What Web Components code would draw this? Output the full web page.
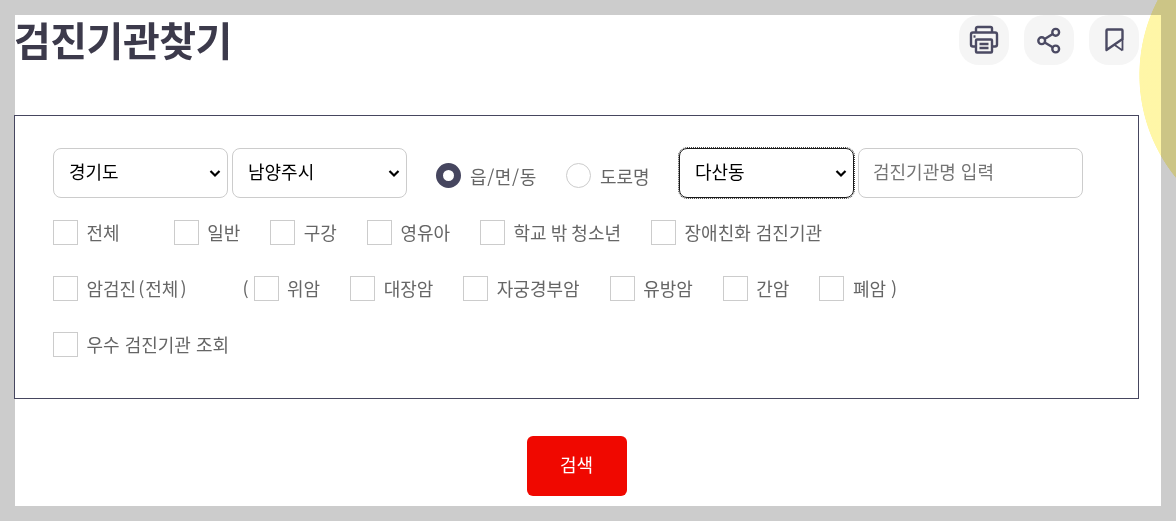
<!DOCTYPE html>
<html lang="ko">
<head>
<meta charset="utf-8">
<title>검진기관찾기</title>
<style>
    html, body { margin: 0; height: 521px; overflow: hidden; background: #ccc; }
    body { font-family: "Noto Sans CJK KR", "Noto Sans", sans-serif; position: relative; }
</style>
</head>
<body>
<search-page>
    <page-header slot="header" title="검진기관찾기"></page-header>
    <filter-panel slot="panel"></filter-panel>
    <search-button slot="action">검색</search-button>
</search-page>

<script>
const FONT = '"Noto Sans CJK KR", "Noto Sans", sans-serif';

class SearchPage extends HTMLElement {
    constructor() {
        super();
        this.attachShadow({mode: 'open'}).innerHTML = `
        <style>
            :host { display: block; padding: 15px; height: 491px; }
            .sheet { background: #fff; width: 1146px; height: 491px; display: flex; flex-direction: column; }
            /* yellow decoration that lies over the page edge */
            .deco {
                position: absolute; left: 1139px; top: 0; width: 37px; height: 521px;
                background: radial-gradient(circle 163px at 163px 75px, rgba(255, 236, 60, .45) 99.6%, transparent 100%);
                mix-blend-mode: multiply; pointer-events: none;
            }
            .action { display: flex; justify-content: center; width: 1125px; margin: 37px 0 0 -1px; }
        </style>
        <div class="sheet">
            <slot name="header"></slot>
            <slot name="panel"></slot>
            <div class="action"><slot name="action"></slot></div>
        </div>
        <div class="deco"></div>
        `;
    }
}

class PageHeader extends HTMLElement {
    constructor() {
        super();
        this.attachShadow({mode: 'open'}).innerHTML = `
        <style>
            :host { display: flex; justify-content: space-between; height: 100px; flex: none; }
            h1 {
                margin: 0 0 0 -1px; font: 700 40px/49px ${FONT}; color: #3c3a4b; letter-spacing: -.5px;
            }
            .tools { display: flex; gap: 15px; padding: 0 22px 0 0; }
        </style>
        <h1>${this.getAttribute('title')}</h1>
        <div class="tools">
            <icon-button icon="print"></icon-button>
            <icon-button icon="share"></icon-button>
            <icon-button icon="bookmark"></icon-button>
        </div>
        `;
    }
}

const ICONS = {
    print: `<path d="M8 8.500V4.500c0-.8.7-1.500 1.500-1.500h13c.8 0 1.500.7 1.500 1.500v4"/>
            <path d="M7 22.500H5C3.800 22.500 3 21.700 3 20.500v-10C3 9.300 3.800 8.500 5 8.500h22c1.200 0 2 .8 2 2v10c0 1.200-.8 2-2 2H25"/>
            <rect x="8" y="15.500" width="16" height="13" rx="1"/>
            <path d="M11.500 20h9M11.500 24h9"/>
            <path d="M5.500 12.500h2"/>`,
    share: `<circle cx="22.700" cy="8.300" r="3.400"/><circle cx="8.700" cy="16.700" r="3.400"/><circle cx="22.700" cy="25" r="3.400"/>
            <path d="M11.700 15 19.700 10M11.700 18.400 19.700 23.300"/>`,
    bookmark: `<path d="M8.500 26V6.500c0-.6.4-1 1-1h14c.6 0 1 .4 1 1V15L8.500 26Z"/>
               <path d="M16 20.500 24.500 26.500M24.500 15v11.500" stroke-width="1.800"/>`
};

class IconButton extends HTMLElement {
    constructor() {
        super();
        this.attachShadow({mode: 'open'}).innerHTML = `
        <style>
            :host {
                display: flex; width: 50px; height: 50px; border-radius: 20px; background: #f5f5f5;
                align-items: center; justify-content: center; box-sizing: border-box;
            }
            svg { width: 32px; height: 32px; fill: none; stroke: #4b4a63; stroke-width: 2.400; stroke-linecap: butt; stroke-linejoin: round; }
        </style>
        <svg viewBox="0 0 32 32">${ICONS[this.getAttribute('icon')]}</svg>
        `;
    }
}

class SelectBox extends HTMLElement {
    constructor() {
        super();
        const focused = this.hasAttribute('focused');
        this.attachShadow({mode: 'open'}).innerHTML = `
        <style>
            :host { display: block; position: relative; width: 175px; height: 50px; flex: none; }
            select {
                appearance: none; width: 100%; height: 100%; box-sizing: border-box; padding: 0 0 4px 15px; margin: 0;
                border: 1px solid #ccc; border-radius: 8px; background-color: #fff;
                font: 400 18px ${FONT}; color: #000;
            }
            select.focused { border-color: #1a1a1a; outline: 1px dotted #444; outline-offset: 0; }
            svg { position: absolute; right: 7px; top: 21px; width: 12px; height: 9px; fill: none; stroke: #000; stroke-width: 2.200; pointer-events: none; }
        </style>
        <select class="${focused ? 'focused' : ''}"><option>${this.getAttribute('value')}</option></select>
        <svg viewBox="0 0 12 9"><path d="M1.500 2 6 6.500 10.500 2"/></svg>
        `;
    }
}

class RadioItem extends HTMLElement {
    constructor() {
        super();
        const on = this.hasAttribute('checked');
        this.attachShadow({mode: 'open'}).innerHTML = `
        <style>
            :host { display: flex; align-items: center; gap: 9px; font: 400 18px ${FONT}; color: #666; }
            i { display: block; width: 25px; height: 25px; border-radius: 50%; box-sizing: border-box; flex: none; }
            i.on { border: 7.500px solid #46465f; }
            i.off { border: 1px solid #ccc; }
        </style>
        <i class="${on ? 'on' : 'off'}"></i><span><slot></slot></span>
        `;
    }
}

class CheckItem extends HTMLElement {
    constructor() {
        super();
        this.attachShadow({mode: 'open'}).innerHTML = `
        <style>
            :host { display: flex; align-items: center; gap: 8.500px; height: 25px; flex: none; font: 400 18px/25px ${FONT}; color: #666; white-space: pre; }
            i { display: block; width: 25px; height: 25px; border: 1px solid #ccc; box-sizing: border-box; flex: none; background: #fff; }
        </style>
        <i></i><span><slot></slot></span>
        `;
    }
}

class FilterPanel extends HTMLElement {
    constructor() {
        super();
        this.attachShadow({mode: 'open'}).innerHTML = `
        <style>
            :host {
                display: flex; flex-direction: column; width: 1125px; height: 284px; box-sizing: border-box;
                margin-left: -1px; padding: 32px 0 0 38px; border: 1px solid #46465f; flex: none;
            }
            .top { display: flex; align-items: center; height: 50px; }
            .top select-box + select-box { margin-left: 4px; }
            .radios { display: flex; width: 272px; padding-left: 29px; box-sizing: border-box; margin-top: 5px; }
            .radios radio-item:first-child { width: 130px; }
            input {
                width: 225px; height: 50px; margin-left: 4px; box-sizing: border-box; padding: 0 14px 4px;
                border: 1px solid #ccc; border-radius: 8px; font: 400 18px ${FONT}; color: #333;
            }
            input::placeholder { color: #757575; opacity: 1; }
            .row { display: flex; align-items: center; gap: 30px; height: 25px; margin-top: 31px; color: #666; font: 400 18px/25px ${FONT}; }
            .top + .row { margin-top: 22px; }
            .paren { width: 6px; margin: 0 -25px 0 26px; }
            .wide { margin-right: 24px; }
        </style>
        <div class="top">
            <select-box value="경기도"></select-box>
            <select-box value="남양주시"></select-box>
            <div class="radios">
                <radio-item checked style="letter-spacing:.6px">읍/면/동</radio-item>
                <radio-item>도로명</radio-item>
            </div>
            <select-box value="다산동" focused style="margin-left:0"></select-box>
            <input placeholder="검진기관명 입력">
        </div>
        <div class="row">
            <check-item class="wide">전체</check-item>
            <check-item>일반</check-item>
            <check-item>구강</check-item>
            <check-item>영유아</check-item>
            <check-item style="word-spacing:-1px">학교 밖 청소년</check-item>
            <check-item>장애친화 검진기관</check-item>
        </div>
        <div class="row">
            <check-item>암검진<span style="padding:0 1px 0 2px">(</span>전체<span style="padding:0 0 0 2px">)</span></check-item>
            <span class="paren">(</span>
            <check-item>위암</check-item>
            <check-item>대장암</check-item>
            <check-item>자궁경부암</check-item>
            <check-item>유방암</check-item>
            <check-item>간암</check-item>
            <check-item>폐암 )</check-item>
        </div>
        <div class="row">
            <check-item>우수 검진기관 조회</check-item>
        </div>
        `;
    }
}

class SearchButton extends HTMLElement {
    constructor() {
        super();
        this.attachShadow({mode: 'open'}).innerHTML = `
        <style>
            :host {
                display: flex; width: 100px; height: 60px; box-sizing: border-box; padding-bottom: 4px; border-radius: 6px; background: #f00800; color: #fff;
                align-items: center; justify-content: center; font: 400 18px ${FONT};
            }
        </style>
        <slot></slot>
        `;
    }
}

customElements.define('icon-button', IconButton);
customElements.define('page-header', PageHeader);
customElements.define('select-box', SelectBox);
customElements.define('radio-item', RadioItem);
customElements.define('check-item', CheckItem);
customElements.define('filter-panel', FilterPanel);
customElements.define('search-button', SearchButton);
customElements.define('search-page', SearchPage);
</script>
</body>
</html>
